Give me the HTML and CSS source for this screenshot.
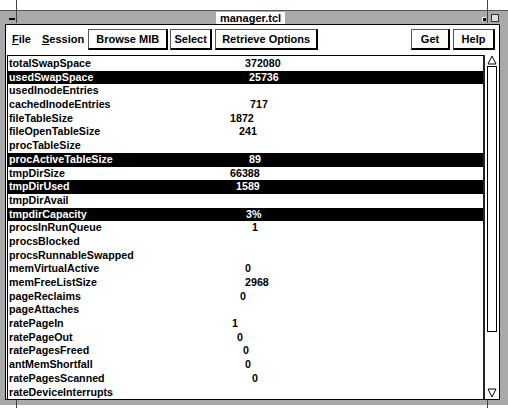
FILE: index.html
```html
<!DOCTYPE html>
<html lang="en">
<head>
  <meta charset="UTF-8">
  <title>manager.tcl</title>
  <link rel="stylesheet" href="styles.css">
</head>
<body>
  <!-- frame corner handles -->
  <span class="tick tick-tl"></span>
  <span class="tick tick-tr"></span>
  <span class="tick tick-bl"></span>
  <span class="tick tick-br"></span>

  <div class="window">
    <div class="titlebar">
      <div class="wm-menu"><span class="dash"></span></div>
      <div class="wm-title"><span class="wm-label">manager.tcl</span></div>
      <div class="wm-min"><span class="dot"></span></div>
      <div class="wm-max"><span class="box"></span></div>
    </div>

    <div class="client">
      <div class="menubar">
        <span class="menu menu-file"><u>F</u>ile</span>
        <span class="menu menu-session"><u>S</u>ession</span>
        <button class="btn btn-browse">Browse MIB</button>
        <button class="btn btn-select">Select</button>
        <button class="btn btn-retrieve">Retrieve Options</button>
        <span class="spacer"></span>
        <button class="btn btn-get">Get</button>
        <button class="btn btn-help">Help</button>
      </div>

      <div class="content">
        <div class="list">
          <div class="row" style="--x:236px"><span>totalSwapSpace</span><span>372080</span></div>
          <div class="row sel" style="--x:240px"><span>usedSwapSpace</span><span>25736</span></div>
          <div class="row"><span>usedInodeEntries</span></div>
          <div class="row" style="--x:241px"><span>cachedInodeEntries</span><span>717</span></div>
          <div class="row" style="--x:221px"><span>fileTableSize</span><span>1872</span></div>
          <div class="row" style="--x:230px"><span>fileOpenTableSize</span><span>241</span></div>
          <div class="row"><span>procTableSize</span></div>
          <div class="row sel" style="--x:240px"><span>procActiveTableSize</span><span>89</span></div>
          <div class="row" style="--x:221px"><span>tmpDirSize</span><span>66388</span></div>
          <div class="row sel" style="--x:227px"><span>tmpDirUsed</span><span>1589</span></div>
          <div class="row"><span>tmpDirAvail</span></div>
          <div class="row sel" style="--x:237px"><span>tmpdirCapacity</span><span>3%</span></div>
          <div class="row" style="--x:243px"><span>procsInRunQueue</span><span>1</span></div>
          <div class="row"><span>procsBlocked</span></div>
          <div class="row"><span>procsRunnableSwapped</span></div>
          <div class="row" style="--x:236px"><span>memVirtualActive</span><span>0</span></div>
          <div class="row" style="--x:236px"><span>memFreeListSize</span><span>2968</span></div>
          <div class="row" style="--x:231px"><span>pageReclaims</span><span>0</span></div>
          <div class="row"><span>pageAttaches</span></div>
          <div class="row" style="--x:223px"><span>ratePageIn</span><span>1</span></div>
          <div class="row" style="--x:228px"><span>ratePageOut</span><span>0</span></div>
          <div class="row" style="--x:234px"><span>ratePagesFreed</span><span>0</span></div>
          <div class="row" style="--x:236px"><span>antMemShortfall</span><span>0</span></div>
          <div class="row" style="--x:243px"><span>ratePagesScanned</span><span>0</span></div>
          <div class="row"><span>rateDeviceInterrupts</span></div>
        </div>

        <div class="scrollbar">
          <div class="arrow">
            <svg width="10" height="10" viewBox="0 0 10 10"><polygon points="5,1 9,9 1,9" fill="none" stroke="#000" stroke-width="1"/></svg>
          </div>
          <div class="thumb"></div>
          <div class="track"></div>
          <div class="arrow">
            <svg width="10" height="10" viewBox="0 0 10 10"><polygon points="1,1 9,1 5,9" fill="none" stroke="#000" stroke-width="1"/></svg>
          </div>
        </div>
      </div>
    </div>
  </div>
</body>
</html>
```

FILE: styles.css
```css
body {
  margin: 0;
  width: 508px;
  height: 408px;
  background: #fff;
  font-family: "Liberation Sans", Arial, sans-serif;
  color: #000;
  position: relative;
  overflow: hidden;
}

.tick {
  position: absolute;
  width: 1px;
  background: #444;
}
.tick-tl { left: 16px; top: 0; height: 23px; }
.tick-tr { left: 487px; top: 0; height: 23px; }
.tick-bl { left: 16px; top: 400px; height: 8px; }
.tick-br { left: 487px; top: 400px; height: 8px; }

.window {
  margin-top: 10px;
  height: 395px;
  box-sizing: border-box;
  border-top: 1px solid #555;
  padding: 0 8px 5px 5px;
  display: flex;
  flex-direction: column;
  background: #a9a9a9;
}

.titlebar {
  height: 13px;
  display: flex;
  background: #a9a9a9;
}

.wm-menu {
  width: 11px;
  position: relative;
}

.dash {
  position: absolute;
  left: 4px;
  top: 7px;
  width: 6px;
  height: 2px;
  background: #000;
}

.wm-title {
  flex: 1;
  display: flex;
  justify-content: center;
  align-items: center;
  padding-left: 7px;
}

.wm-label {
  background: #fff;
  font-size: 11px;
  font-weight: bold;
  line-height: 12px;
  padding: 0 4px;
}

.wm-min {
  width: 11px;
  display: flex;
  align-items: center;
  justify-content: center;
}

.dot {
  width: 3px;
  height: 3px;
  background: #000;
  border-top: 1px solid #fff;
  border-left: 1px solid #fff;
  margin-top: 3px;
}

.wm-max {
  width: 11px;
  display: flex;
  align-items: center;
  justify-content: center;
}

.box {
  width: 6px;
  height: 6px;
  border: 1px solid #333;
  background: #ddd;
}

.client {
  flex: 1;
  display: flex;
  flex-direction: column;
  background: #fff;
  border: 1px solid #000;
  min-height: 0;
}

.menubar {
  height: 28px;
  box-sizing: border-box;
  padding: 4px 4px 0 6px;
  display: flex;
  align-items: flex-start;
  font-size: 11px;
  font-weight: bold;
}

.menu {
  line-height: 21px;
}
.menu-file { margin-right: 11px; }
.menu-session { margin-right: 4px; }

.btn {
  height: 21px;
  box-sizing: border-box;
  background: #fff;
  color: #000;
  font: bold 11px "Liberation Sans", Arial, sans-serif;
  padding: 0;
  border: 1px solid #555;
  border-right: 2px solid #000;
  border-bottom: 2px solid #000;
  margin-right: 2px;
}
.btn-browse { width: 80px; }
.btn-select { width: 42px; margin-right: 3px; }
.btn-retrieve { width: 103px; }
.btn-get { width: 39px; margin-right: 3px; }
.btn-help { width: 42px; margin-right: 0; }

.spacer { flex: 1; }

.content {
  flex: 1;
  display: flex;
  padding: 2px 0 0 1px;
  min-height: 0;
}

.list {
  flex: 1;
  border-top: 1px solid #000;
  border-left: 1px solid #000;
  padding-top: 1px;
  overflow: hidden;
  font-size: 10.7px;
  font-weight: bold;
}

.row {
  height: 13.7px;
  line-height: 13.7px;
  padding-left: 1px;
  display: grid;
  grid-template-columns: var(--x, 100%) auto;
  white-space: nowrap;
}

.row.sel {
  background: #000;
  color: #fff;
}

.scrollbar {
  width: 14px;
  border-left: 2px solid #222;
  display: flex;
  flex-direction: column;
  align-items: center;
  padding-bottom: 1px;
}

.arrow {
  width: 10px;
  height: 10px;
  display: flex;
}

.thumb {
  width: 10px;
  height: 266px;
  box-sizing: border-box;
  border: 1px solid #000;
  margin-top: 1px;
}

.track { flex: 1; }
```
